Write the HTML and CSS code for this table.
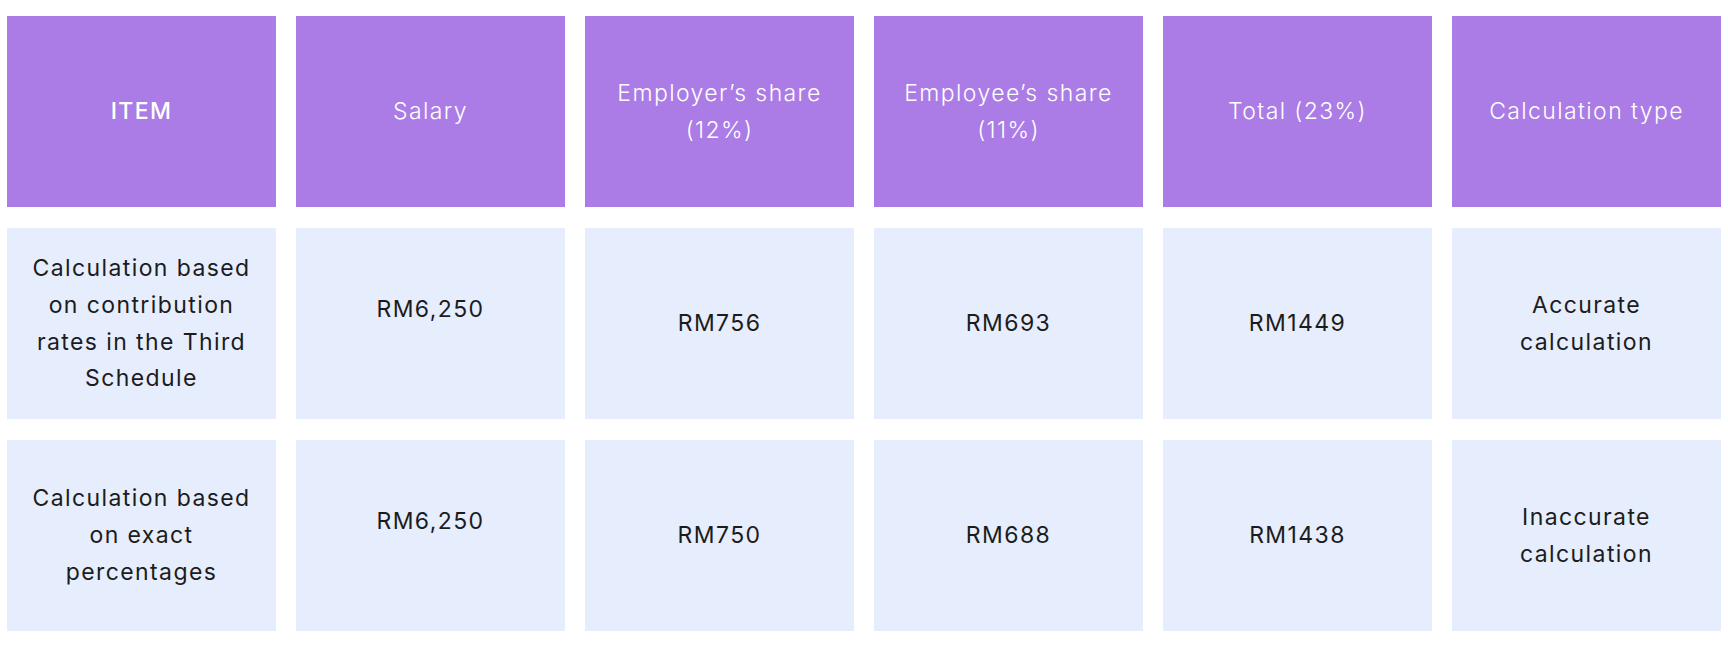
FILE: index.html
```html
<!DOCTYPE html>
<html lang="en">
<head>
<meta charset="utf-8">
<title>Contribution calculation</title>
<link rel="stylesheet" href="styles.css">
</head>
<body>
<div class="table">
  <div class="cell head strong">ITEM</div>
  <div class="cell head">Salary</div>
  <div class="cell head">Employer’s share (12%)</div>
  <div class="cell head">Employee’s share (11%)</div>
  <div class="cell head">Total (23%)</div>
  <div class="cell head">Calculation type</div>

  <div class="cell body">Calculation based on contribution rates in the Third Schedule</div>
  <div class="cell body salary">RM6,250</div>
  <div class="cell body">RM756</div>
  <div class="cell body">RM693</div>
  <div class="cell body">RM1449</div>
  <div class="cell body">Accurate calculation</div>

  <div class="cell body">Calculation based on exact percentages</div>
  <div class="cell body salary">RM6,250</div>
  <div class="cell body">RM750</div>
  <div class="cell body">RM688</div>
  <div class="cell body">RM1438</div>
  <div class="cell body">Inaccurate calculation</div>
</div>
</body>
</html>
```

FILE: styles.css
```css
html, body {
  margin: 0;
  padding: 0;
  background: #ffffff;
}

body {
  font-family: Inter, "Noto Sans", "Liberation Sans", sans-serif;
}

.table {
  display: grid;
  grid-template-columns: repeat(6, 269px);
  grid-template-rows: repeat(3, 191px);
  column-gap: 20px;
  row-gap: 21px;
  padding: 16px 7px 18px 7px;
}

.cell {
  display: flex;
  align-items: center;
  justify-content: center;
  text-align: center;
  padding: 0 18px;
  font-size: 23px;
  letter-spacing: 1.4px;
  line-height: 36.7px;
  box-sizing: border-box;
}

.head {
  background: #ab7be6;
  color: #ffffff;
  font-weight: 300;
}

.head.strong {
  font-weight: 500;
}

.body {
  background: #e6edfc;
  color: #1c1c1c;
  font-weight: 400;
}

.salary {
  padding-bottom: 28px;
}
```
